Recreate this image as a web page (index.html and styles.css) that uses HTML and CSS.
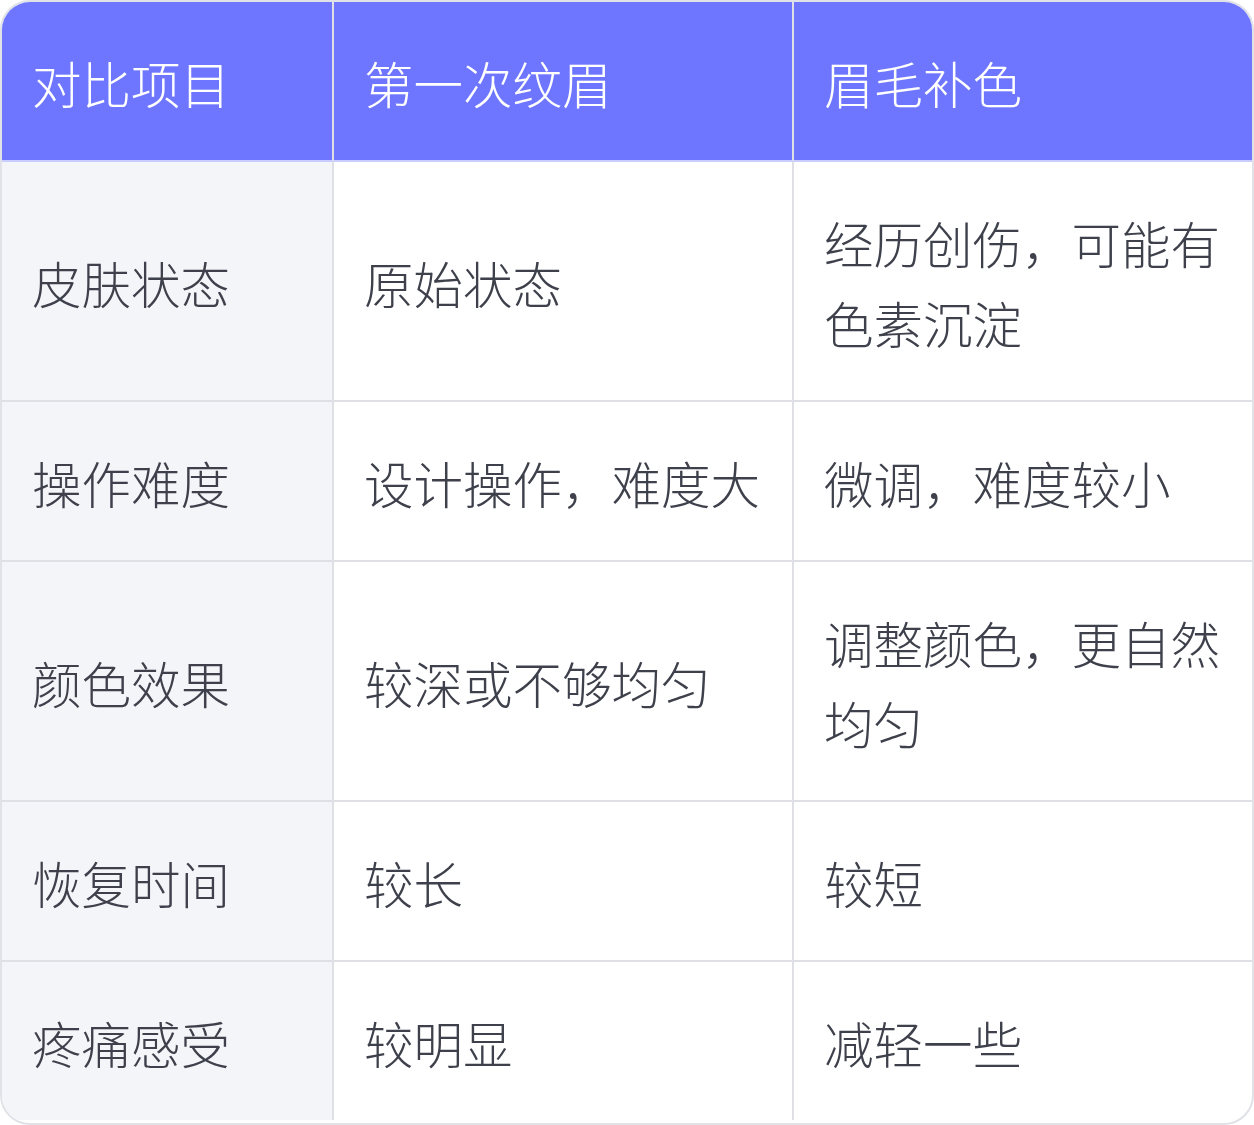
FILE: index.html
```html
<!DOCTYPE html>
<html lang="zh-CN">
<head>
<meta charset="utf-8">
<link rel="stylesheet" href="styles.css">
</head>
<body>
<div class="wrap">
<table class="cmp">
<colgroup><col class="c1"><col class="c2"><col class="c3"></colgroup>
<thead>
<tr><th>对比项目</th><th>第一次纹眉</th><th>眉毛补色</th></tr>
</thead>
<tbody>
<tr><td class="label">皮肤状态</td><td>原始状态</td><td>经历创伤，可能有色素沉淀</td></tr>
<tr><td class="label">操作难度</td><td>设计操作，难度大</td><td>微调，难度较小</td></tr>
<tr><td class="label">颜色效果</td><td>较深或不够均匀</td><td>调整颜色，更自然均匀</td></tr>
<tr><td class="label">恢复时间</td><td>较长</td><td>较短</td></tr>
<tr><td class="label">疼痛感受</td><td>较明显</td><td>减轻一些</td></tr>
</tbody>
</table>
</div>
</body>
</html>
```
FILE: styles.css
```css
html, body {
  margin: 0;
  padding: 0;
  background: #ffffff;
}
.wrap {
  width: 1254px;
  height: 1125px;
  box-sizing: border-box;
  border: 2px solid #e1e2e7;
  border-radius: 30px;
  overflow: hidden;
  background: #ffffff;
}
.cmp {
  width: 100%;
  border-collapse: separate;
  border-spacing: 0;
  table-layout: fixed;
  font-family: "Noto Sans CJK SC", "Noto Sans", sans-serif;
  font-weight: 300;
  font-size: 49.5px;
  line-height: 80px;
  color: #3e414b;
}
.c1 { width: 332px; }
.c2 { width: 460px; }
.cmp th, .cmp td {
  padding: 41px 18px 37px 30px;
  text-align: left;
  vertical-align: middle;
  border-right: 2px solid #dfe0e5;
  border-bottom: 2px solid #dfe0e5;
}
.cmp th:last-child, .cmp td:last-child {
  border-right: none;
}
.cmp tbody tr:last-child td {
  border-bottom: none;
}
.cmp th {
  background: #6e76ff;
  color: #ffffff;
  font-weight: 300;
  border-bottom-color: #c9ccff;
}
.cmp td.label {
  background: #f4f5f9;
}
```
